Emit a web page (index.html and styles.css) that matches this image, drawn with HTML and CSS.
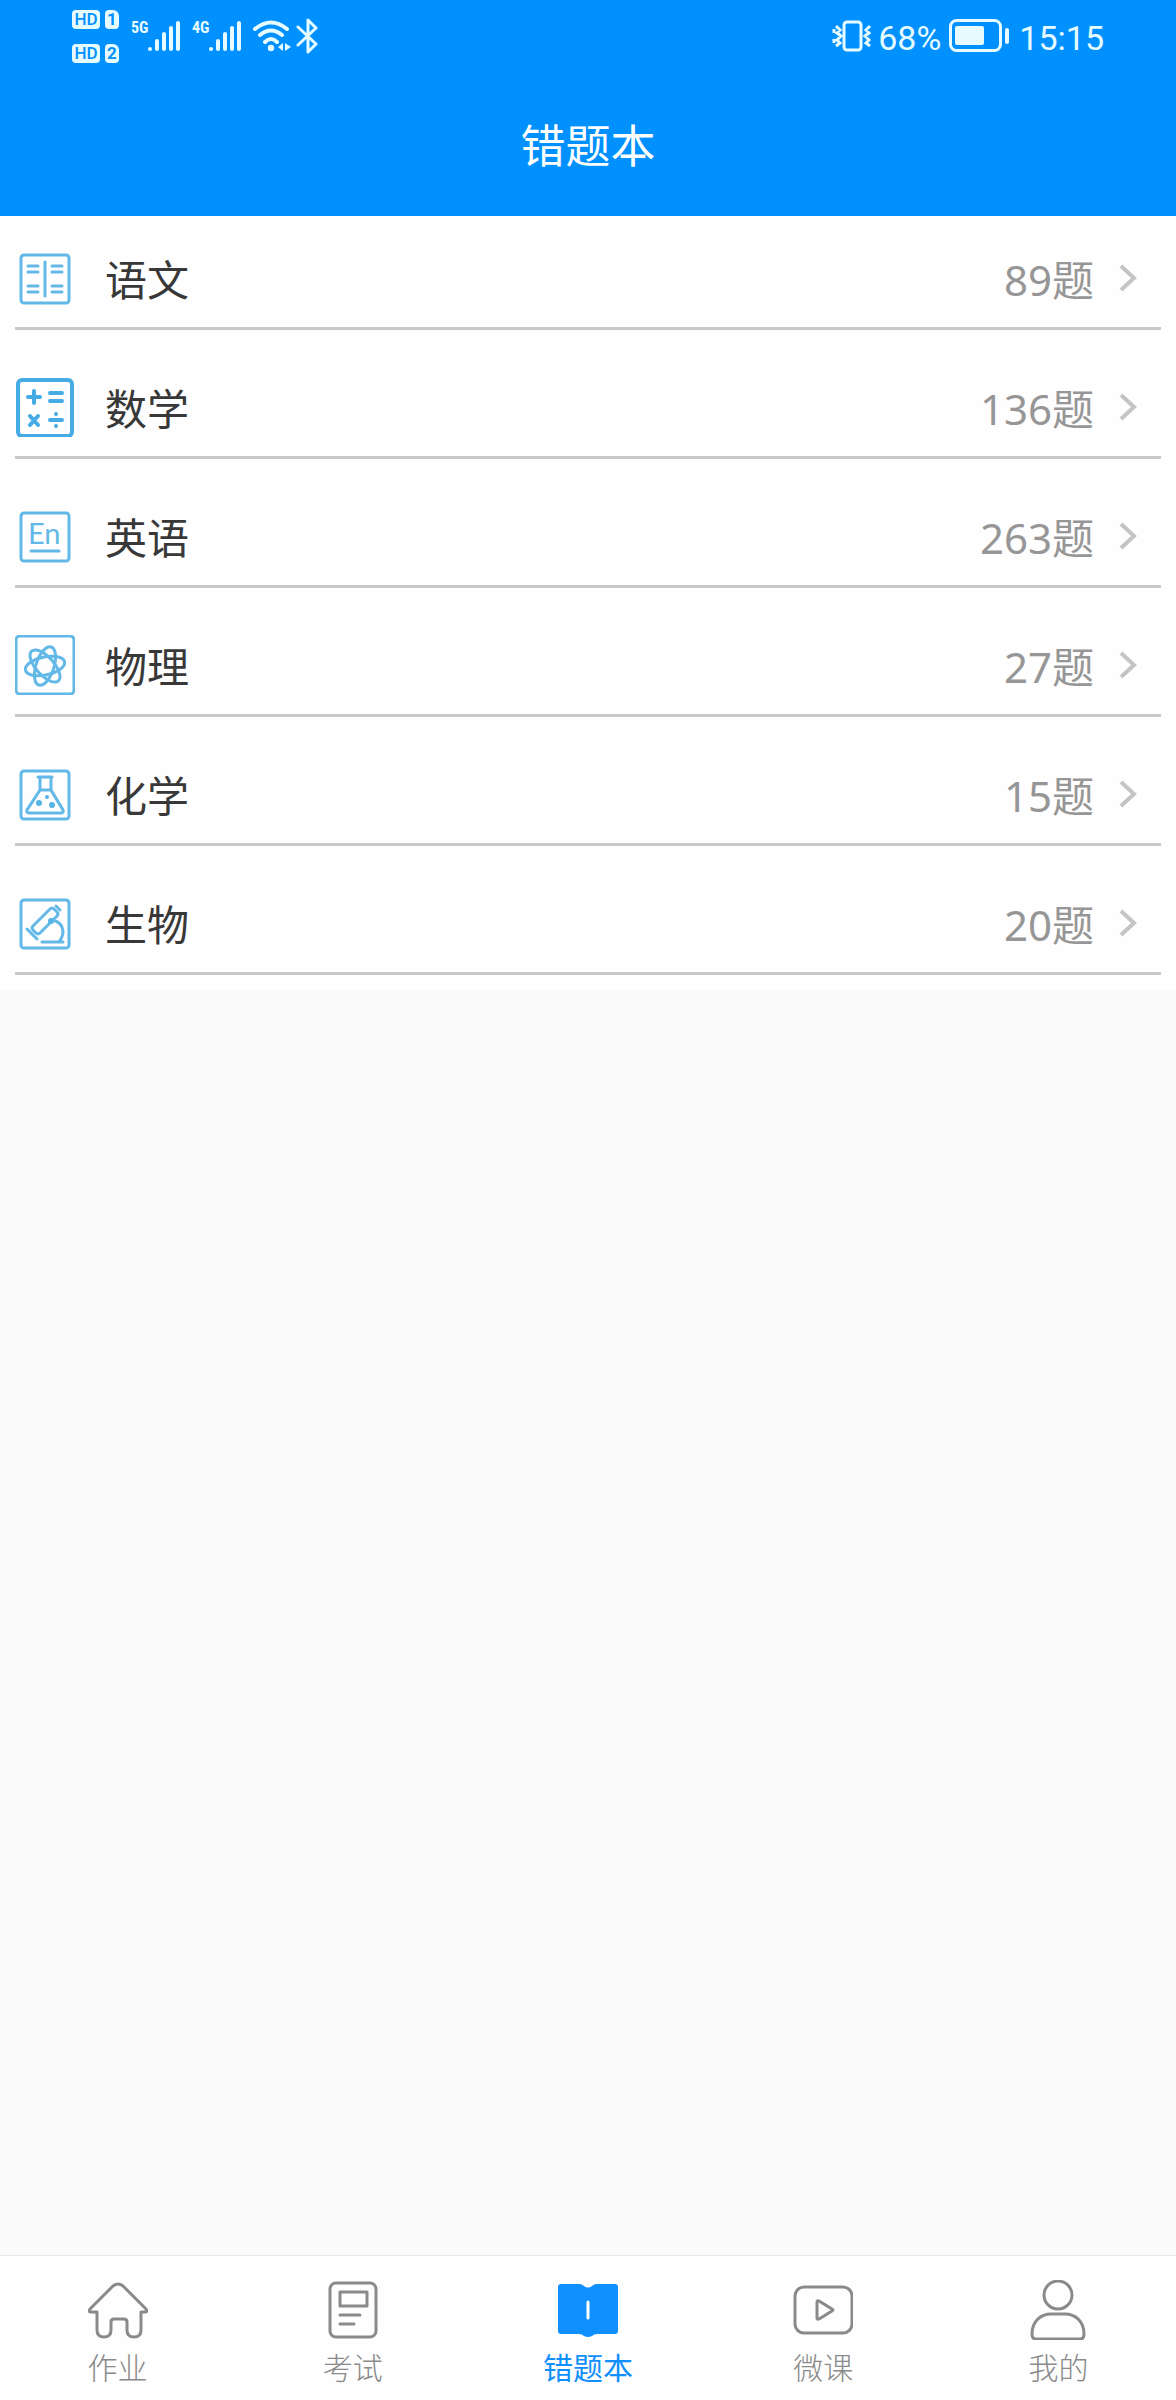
FILE: index.html
```html
<!DOCTYPE html>
<html lang="zh-CN">
	<head>
		<meta charset="utf-8">
		<meta name="viewport" content="width=device-width, initial-scale=1">
		<title>错题本</title>
		<link rel="stylesheet" href="styles.css">
	</head>
	<body>
		<header class="header">
			<div class="status">
				<div class="sims">
					<span class="hd">HD</span><span class="sim">1</span>
					<span class="hd">HD</span><span class="sim">2</span>
				</div>
				<div class="signal">
					<span class="net">5G</span>
					<svg width="34" height="32" viewBox="0 0 34 32" stroke="currentColor" stroke-width="4" stroke-linecap="round">
						<path d="M2 29v0M9 21v8M16 14v15M23 8v21M30 3v26" />
					</svg>
				</div>
				<div class="signal">
					<span class="net">4G</span>
					<svg width="34" height="32" viewBox="0 0 34 32" stroke="currentColor" stroke-width="4" stroke-linecap="round">
						<path d="M2 29v0M9 21v8M16 14v15M23 8v21M30 3v26" />
					</svg>
				</div>
				<svg class="wifi" width="38" height="32" viewBox="0 0 38 32" fill="none" stroke="currentColor" stroke-width="4" stroke-linecap="round">
					<path d="M2 9Q18-4 34 9M7 15Q18 6 29 15M12 22Q18 16 24 22" />
					<circle cx="18" cy="28" r="3.2" fill="currentColor" stroke="none" />
					<path d="M30 23v8l-5-4zM32 23v8l6-4z" fill="currentColor" stroke="none" />
				</svg>
				<svg class="bt" width="22" height="36" viewBox="0 0 22 36" fill="none" stroke="currentColor" stroke-width="3" stroke-linejoin="round" stroke-linecap="round">
					<path d="M2 9l18 17-8 8V2l8 8L2 27" />
				</svg>
				<div class="status-right">
					<svg width="40" height="34" viewBox="0 0 40 34" fill="none" stroke="currentColor" stroke-width="3">
						<rect x="12" y="3" width="17" height="28" rx="3" />
						<path d="M4 7l4 4-3 3 4 3-4 4 3 3-4 3M2 10v4M2 20v4M38 7l-4 4 3 3-4 3 4 4-3 3 4 3" />
					</svg>
					<span>68%</span>
					<svg class="battery" width="60" height="34" viewBox="0 0 60 34">
						<rect x="1.5" y="1.5" width="50" height="30" rx="6" fill="none" stroke="currentColor" stroke-width="3" />
						<rect x="6" y="7" width="29" height="19" rx="2" fill="currentColor" />
						<rect x="56" y="9" width="4" height="16" rx="2" fill="currentColor" />
					</svg>
					<time>15:15</time>
				</div>
			</div>
			<h1>错题本</h1>
		</header>

		<main>
			<ul class="subjects">
				<li>
					<a href="#">
						<svg class="icon" viewBox="0 0 60 60">
							<rect x="6" y="7" width="48" height="48" rx="3" />
							<path d="M30 14v34M13 18h10M13 24h10M13 38h10M13 44h10M37 18h10M37 24h10M37 38h10M37 44h10" />
						</svg>
						<span class="name">语文</span>
						<span class="count">89题</span>
						<svg class="arrow" viewBox="0 0 18 28"><path d="M2 2l13 12L2 26" /></svg>
					</a>
				</li>
				<li>
					<a href="#">
						<svg class="icon bold" viewBox="0 0 60 60">
							<rect x="3" y="3" width="54" height="56" rx="4" />
							<path d="M13 20h12M19 14v12M35 16h12M35 24h12M15 39l8 9M23 39l-8 9M35 43h12M41 37v0M41 49v0" />
						</svg>
						<span class="name">数学</span>
						<span class="count">136题</span>
						<svg class="arrow" viewBox="0 0 18 28"><path d="M2 2l13 12L2 26" /></svg>
					</a>
				</li>
				<li>
					<a href="#">
						<svg class="icon" viewBox="0 0 60 60">
							<rect x="6" y="7" width="48" height="48" rx="3" />
							<text x="13" y="38">En</text>
							<path d="M16 45h28" />
						</svg>
						<span class="name">英语</span>
						<span class="count">263题</span>
						<svg class="arrow" viewBox="0 0 18 28"><path d="M2 2l13 12L2 26" /></svg>
					</a>
				</li>
				<li>
					<a href="#">
						<svg class="icon" viewBox="0 0 60 60">
							<rect x="1" y="1" width="58" height="58" rx="4" />
							<ellipse cx="30" cy="31" rx="20" ry="9" transform="rotate(-12 30 31)" />
							<ellipse cx="30" cy="31" rx="20" ry="9" transform="rotate(48 30 31)" />
							<ellipse cx="30" cy="31" rx="20" ry="9" transform="rotate(108 30 31)" />
						</svg>
						<span class="name">物理</span>
						<span class="count">27题</span>
						<svg class="arrow" viewBox="0 0 18 28"><path d="M2 2l13 12L2 26" /></svg>
					</a>
				</li>
				<li>
					<a href="#">
						<svg class="icon" viewBox="0 0 60 60">
							<rect x="6" y="7" width="48" height="48" rx="3" />
							<path d="M23 13h14M25 13v13L12 46q-1 3 2 3h32q3 0 2-3L36 26V13M25 26h11" />
							<g class="dots">
								<circle cx="24" cy="39" r="3" />
								<circle cx="32" cy="33" r="2" />
								<circle cx="37" cy="41" r="3" />
							</g>
						</svg>
						<span class="name">化学</span>
						<span class="count">15题</span>
						<svg class="arrow" viewBox="0 0 18 28"><path d="M2 2l13 12L2 26" /></svg>
					</a>
				</li>
				<li>
					<a href="#">
						<svg class="icon" viewBox="0 0 60 60">
							<rect x="6" y="7" width="48" height="48" rx="3" />
							<path d="M35 16q2-2 4 0l3 3q2 2 0 4L25 40q-2 2-4 0l-3-3q-2-2 0-4zM41 13l4 4M12 36l10 10M27 49h21M37 27q10 2 11 11 0 6-4 11" />
							<g class="dots"><circle cx="36" cy="28" r="3" /></g>
						</svg>
						<span class="name">生物</span>
						<span class="count">20题</span>
						<svg class="arrow" viewBox="0 0 18 28"><path d="M2 2l13 12L2 26" /></svg>
					</a>
				</li>
			</ul>
		</main>

		<nav class="tabs">
			<a href="#">
				<svg viewBox="0 0 60 60">
					<path d="M9 32H3q-3 0-1-3L25 6q5-4 10 0l23 23q2 3-1 3h-4v18q0 7-7 7t-7-7v-8q0-3-3-3H26q-3 0-3 3v8q0 7-7 7t-7-7z" />
				</svg>
				<span>作业</span>
			</a>
			<a href="#">
				<svg viewBox="0 0 60 60">
					<rect x="7" y="3" width="46" height="54" rx="6" />
					<rect x="17" y="12" width="27" height="14" />
					<path d="M17 35h20M17 44h14" />
				</svg>
				<span>考试</span>
			</a>
			<a href="#" class="active">
				<svg viewBox="0 0 60 60">
					<path class="fill" d="M3 4h18q3 0 5 2 4 3 8 0 2-2 5-2h18q3 0 3 3v44q0 3-3 3H39q-3 0-5 2-4 2-8 0-2-2-5-2H3q-3 0-3-3V7q0-3 3-3z" />
					<path class="mark" d="M30 22v16" />
				</svg>
				<span>错题本</span>
			</a>
			<a href="#">
				<svg viewBox="0 0 60 60">
					<rect x="2" y="7" width="57" height="46" rx="9" />
					<path d="M24 22v16q0 2 2 1l13-8q2-1 0-2l-13-8q-2-1-2 1z" />
				</svg>
				<span>微课</span>
			</a>
			<a href="#">
				<svg viewBox="0 0 60 60">
					<circle cx="30" cy="15" r="14" />
					<path d="M4 54C4 41 13 34 23 34h14c10 0 19 7 19 20q0 5-4 5H8q-4 0-4-5z" />
				</svg>
				<span>我的</span>
			</a>
		</nav>
	</body>
</html>
```

FILE: styles.css
```css
* {
	box-sizing: border-box;
}
body {
	margin: 0;
	min-height: 100vh;
	display: flex;
	flex-direction: column;
	background: #fafafb;
	font-family: "Noto Sans", "Noto Sans CJK SC", sans-serif;
}
a {
	color: inherit;
	text-decoration: none;
}
svg {
	display: block;
	flex: none;
}

.header {
	background: #0091ff;
	color: #fff;
}
.header h1 {
	margin: 0;
	font-size: 45px;
	font-weight: 400;
	line-height: 144px;
	text-align: center;
	font-family: "Noto Sans CJK SC", sans-serif;
}

.status {
	display: flex;
	align-items: center;
	height: 72px;
	padding: 0 72px;
	color: #e6fbff;
	font-family: Roboto, sans-serif;
}
.sims {
	display: grid;
	grid-template-columns: 28px 14px;
	gap: 15px 5px;
	margin-right: 12px;
}
.sims span {
	height: 19px;
	border-radius: 4px;
	background: #e6fbff;
	color: #0091ff;
	font-size: 17px;
	font-weight: 500;
	line-height: 19px;
	text-align: center;
}
.sims .sim {
	border-top-right-radius: 6px;
	font-weight: 700;
}
.signal {
	display: flex;
	margin-right: 10px;
}
.net {
	width: 17px;
	font-family: "Liberation Sans Narrow", "Roboto Condensed", Roboto, sans-serif;
	font-size: 16px;
	font-weight: 700;
	line-height: 16px;
}
.bt {
	margin-left: 5px;
}
.status-right {
	display: flex;
	align-items: center;
	margin-left: auto;
	font-size: 34px;
	line-height: 40px;
}
.status-right span,
.status-right time {
	padding-top: 4px;
}
.status-right span {
	margin: 0 8px 0 6px;
}
.battery {
	margin-right: 10px;
}

main {
	flex: 1;
}
.subjects {
	display: grid;
	gap: 15px;
	margin: 0;
	padding: 0 15px 15px;
	list-style: none;
	background: #fefefe;
}
.subjects a {
	display: flex;
	align-items: center;
	padding: 32px 24px 19px 0;
	border-bottom: 3px solid #cac8c8;
	font-size: 42px;
	line-height: 56px;
}
.name,
.count {
	padding-top: 4px;
}
.name {
	margin-left: 30px;
	color: #383838;
}
.count {
	margin-left: auto;
	color: #969696;
}
.icon {
	width: 60px;
	height: 60px;
	fill: none;
	stroke: #62b8e6;
	stroke-width: 3;
	stroke-linecap: round;
}
.icon.bold {
	stroke: #45abe5;
	stroke-width: 4;
}
.icon text {
	fill: #62b8e6;
	stroke: none;
	font-family: Lato, sans-serif;
	font-size: 29px;
}
.icon .dots {
	fill: #56b4e4;
	stroke: none;
}
.arrow {
	width: 18px;
	height: 28px;
	margin-left: 25px;
	fill: none;
	stroke: #c4c4c4;
	stroke-width: 4;
}

.tabs {
	display: flex;
	border-top: 1px solid #e8e8e8;
	background: #fefefe;
}
.tabs a {
	flex: 1;
	display: flex;
	flex-direction: column;
	align-items: center;
	gap: 6px;
	padding: 24px 0 10px;
	color: #8a8a8a;
	font-size: 30px;
	font-weight: 300;
	line-height: 44px;
}
.tabs svg {
	width: 60px;
	height: 60px;
	fill: none;
	stroke: currentColor;
	stroke-width: 3;
	stroke-linecap: round;
	stroke-linejoin: round;
}
.tabs .active {
	color: #1090ff;
	font-weight: 400;
}
.tabs .fill {
	fill: currentColor;
	stroke: none;
}
.tabs .mark {
	stroke: #fff;
	stroke-width: 3;
}
```
